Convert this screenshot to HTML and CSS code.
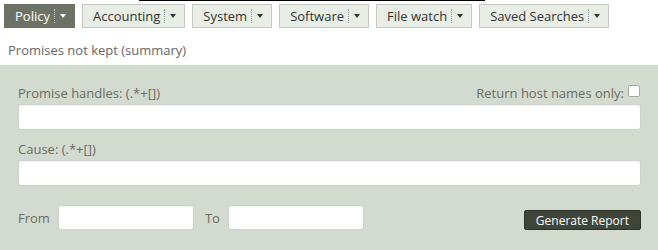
FILE: index.html
```html
<!DOCTYPE html>
<html lang="en">
<head>
    <meta charset="UTF-8">
    <meta name="viewport" content="width=device-width, initial-scale=1.0">
    <title>Promises not kept</title>
    <link rel="stylesheet" href="styles.css">
</head>
<body>

    <div class="top-rule"></div>

    <!-- Report menu -->
    <ul class="tabs">
        <li class="tab active"><span class="tab-label">Policy</span><span class="tab-sep"></span><span class="tab-arrow"></span></li>
        <li class="tab"><span class="tab-label">Accounting</span><span class="tab-sep"></span><span class="tab-arrow"></span></li>
        <li class="tab"><span class="tab-label">System</span><span class="tab-sep"></span><span class="tab-arrow"></span></li>
        <li class="tab"><span class="tab-label">Software</span><span class="tab-sep"></span><span class="tab-arrow"></span></li>
        <li class="tab"><span class="tab-label">File watch</span><span class="tab-sep"></span><span class="tab-arrow"></span></li>
        <li class="tab"><span class="tab-label">Saved Searches</span><span class="tab-sep"></span><span class="tab-arrow"></span></li>
    </ul>

    <p class="report-title">Promises not kept (summary)</p>

    <form class="report-form">
        <div class="field">
            <div class="field-head">
                <label for="handles">Promise handles: (.*+[])</label>
                <label class="hosts-only">Return host names only: <input type="checkbox" class="check"></label>
            </div>
            <input type="text" id="handles" class="text-input">
        </div>

        <div class="field">
            <div class="field-head">
                <label for="cause">Cause: (.*+[])</label>
            </div>
            <input type="text" id="cause" class="text-input">
        </div>

        <div class="date-row">
            <label for="from">From</label>
            <input type="text" id="from" class="text-input date-input">
            <label for="to" class="to-label">To</label>
            <input type="text" id="to" class="text-input date-input">
            <button type="button" class="generate">Generate Report</button>
        </div>
    </form>

</body>
</html>
```

FILE: styles.css
```css
body {
    font-family: 'Open Sans', 'DejaVu Sans', sans-serif;
    font-size: 13px;
    background-color: #fff;
    margin: 0;
    padding: 0;
}

.top-rule {
    width: 346px;
    height: 1px;
    margin-left: 139px;
    background-color: #000;
}

.tabs {
    list-style: none;
    display: flex;
    gap: 7px;
    margin: 3px 0 0 0;
    padding: 0 0 0 4px;
}

.tab {
    display: flex;
    align-items: center;
    height: 24px;
    padding: 0 8px 0 10px;
    border: 1px solid #c4cac1;
    background-color: #e8eee5;
    color: #333;
    box-sizing: border-box;
}

.tab.active {
    background-color: #6c7366;
    border-color: #6c7366;
    color: #fff;
}

.tab-sep {
    width: 0;
    height: 14px;
    margin: 0 5px 0 4px;
    border-left: 1px dotted #999;
}

.tab.active .tab-sep {
    border-left-color: #ccc;
}

.tab-arrow {
    width: 0;
    height: 0;
    border-left: 3px solid transparent;
    border-right: 3px solid transparent;
    border-top: 4px solid #333;
}

.tab.active .tab-arrow {
    border-top-color: #fff;
}

.report-title {
    margin: 0;
    padding: 13px 0 0 8px;
    height: 24px;
    line-height: 18px;
    color: #666;
}

.report-form {
    background-color: #d3dbd0;
    padding: 19px 17px 30px 18px;
    color: #6b6b60;
}

.field {
    margin-bottom: 10px;
}

.field-head {
    display: flex;
    justify-content: space-between;
    align-items: center;
    height: 18px;
    margin-bottom: 2px;
}

.hosts-only {
    display: flex;
    align-items: center;
}

.check {
    appearance: none;
    width: 12px;
    height: 12px;
    margin: 0 1px 4px 4px;
    border: 1px solid #a9a9a0;
    border-radius: 2px;
    background-color: #fff;
}

.text-input {
    display: block;
    width: 100%;
    height: 26px;
    border: 1px solid #cfd3cc;
    border-radius: 3px;
    background-color: #fff;
    box-shadow: inset 0 1px 1px rgba(0, 0, 0, 0.06);
    box-sizing: border-box;
}

.date-row {
    display: flex;
    align-items: center;
    margin-top: 19px;
}

.date-input {
    width: 136px;
    height: 25px;
    margin-left: 8px;
}

.to-label {
    margin-left: 11px;
}

.generate {
    margin-left: auto;
    align-self: flex-end;
    height: 20px;
    padding: 0 11px;
    background-color: #3f4539;
    color: #fff;
    border: 1px solid #2e3329;
    border-radius: 2px;
    font-family: 'Open Sans', 'DejaVu Sans', sans-serif;
    font-size: 12px;
    cursor: pointer;
}

.generate:hover {
    background-color: #2e3329;
}
```
